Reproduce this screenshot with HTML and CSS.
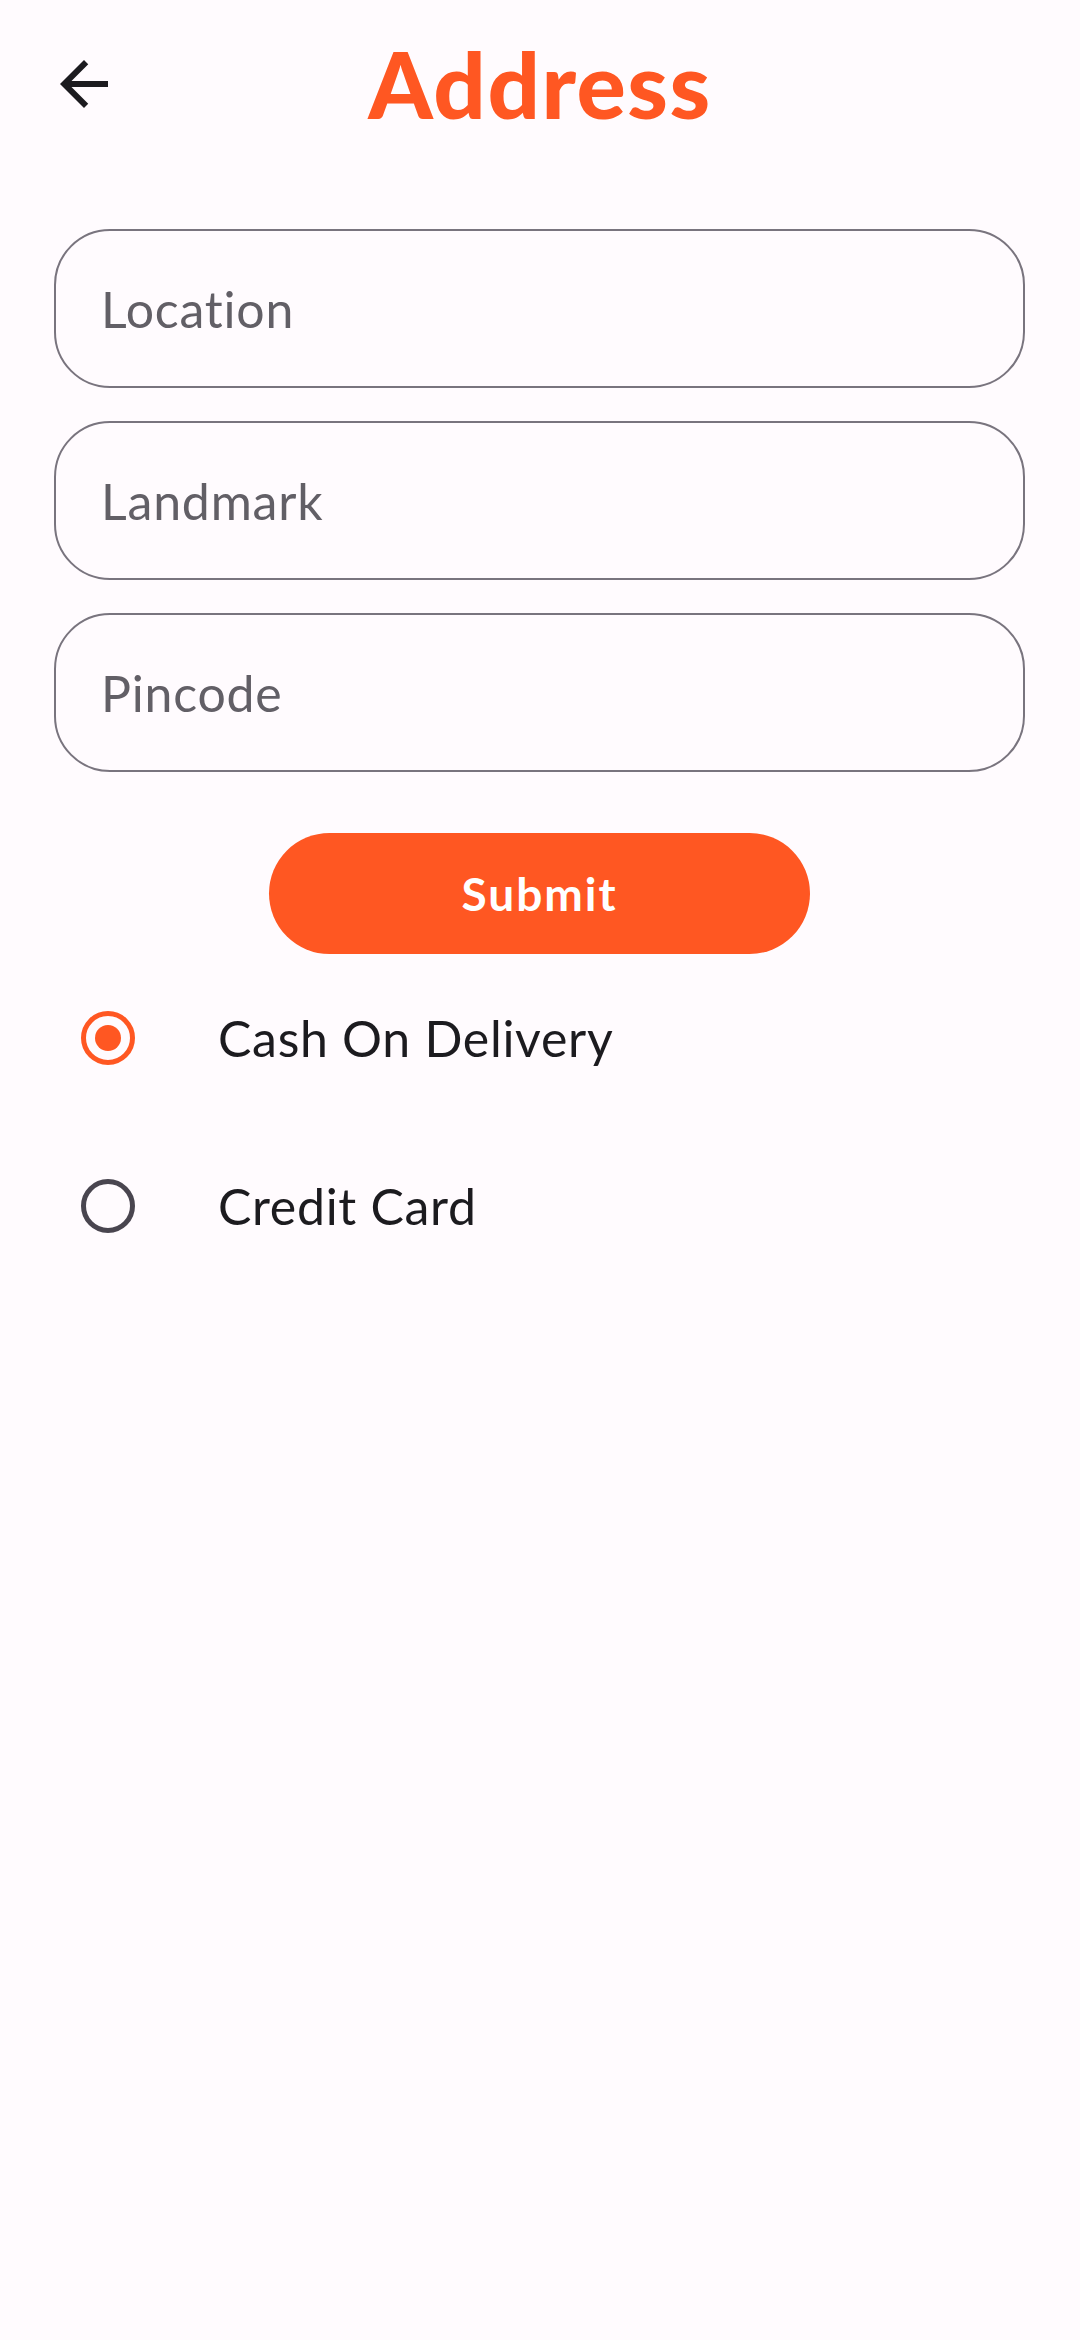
FILE: index.html
```html
<!DOCTYPE html>
<html>
<head>
<meta charset="utf-8">
<link rel="stylesheet" href="styles.css">
</head>
<body>
<div class="screen">
  <header class="topbar">
    <div class="back">
      <svg viewBox="0 0 24 24" width="72" height="72"><path d="M20 11H7.83l5.59-5.59L12 4l-8 8 8 8 1.41-1.41L7.83 13H20v-2z" fill="#1C1B1F"/></svg>
    </div>
    <h1 class="title">Address</h1>
  </header>
  <form class="form">
    <div class="field"><span class="ph">Location</span></div>
    <div class="field"><span class="ph">Landmark</span></div>
    <div class="field"><span class="ph">Pincode</span></div>
    <div class="btnwrap"><div class="submit">Submit</div></div>
  </form>
  <div class="options">
    <div class="option">
      <span class="radio on"><span class="dot"></span></span>
      <span class="olabel">Cash On Delivery</span>
    </div>
    <div class="option">
      <span class="radio"></span>
      <span class="olabel">Credit Card</span>
    </div>
  </div>
</div>
</body>
</html>
```
FILE: styles.css
```css
html, body {
  margin: 0;
  padding: 0;
  background: #FFFBFE;
}
body {
  font-family: "Lato", "Open Sans", sans-serif;
  width: 1080px;
  height: 2340px;
}
.screen {
  display: flex;
  flex-direction: column;
}
.topbar {
  height: 168px;
  position: relative;
  display: flex;
  align-items: center;
  justify-content: center;
}
.back {
  position: absolute;
  left: 48px;
  top: 48px;
  width: 72px;
  height: 72px;
}
.back svg { display: block; }
.title {
  margin: 0;
  font-family: "Lato", sans-serif;
  font-weight: 900;
  font-size: 92px;
  color: #FF5722;
  line-height: 1;
  letter-spacing: 1.5px;
}
.form {
  display: flex;
  flex-direction: column;
  gap: 33px;
  padding: 61px 55px 0 54px;
}
.field {
  height: 159px;
  box-sizing: border-box;
  border: 2.5px solid #79747E;
  border-radius: 56px;
  display: flex;
  align-items: center;
  padding-left: 45px;
}
.ph {
  font-size: 50px;
  letter-spacing: 0.8px;
  color: #625F66;
}
.btnwrap {
  display: flex;
  justify-content: center;
  margin-top: 28px;
}
.submit {
  width: 541px;
  height: 121px;
  border-radius: 61px;
  background: #FF5722;
  color: #fff;
  font-weight: 700;
  font-size: 46px;
  letter-spacing: 2px;
  display: flex;
  align-items: center;
  justify-content: center;
}
.options {
  display: flex;
  flex-direction: column;
}
.option {
  height: 168px;
  display: flex;
  align-items: center;
  padding-left: 81px;
}
.radio {
  width: 54px;
  height: 54px;
  box-sizing: border-box;
  border: 5.5px solid #49454F;
  border-radius: 50%;
  display: flex;
  align-items: center;
  justify-content: center;
}
.radio.on { border-color: #FF5722; }
.dot {
  width: 26px;
  height: 26px;
  border-radius: 50%;
  background: #FF5722;
}
.olabel {
  margin-left: 83px;
  font-size: 50px;
  letter-spacing: 0.7px;
  color: #1C1B1F;
}
```
